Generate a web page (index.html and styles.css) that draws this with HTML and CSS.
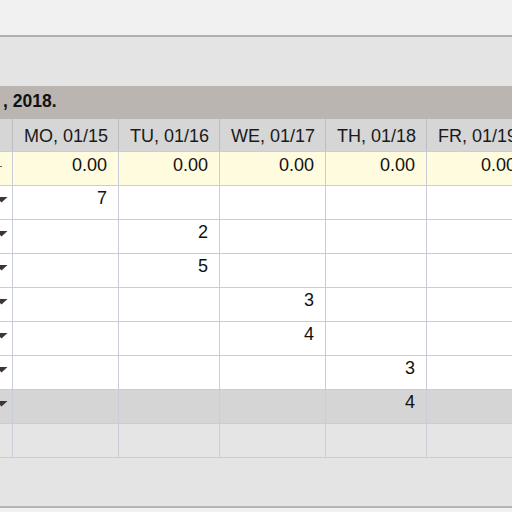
FILE: index.html
```html
<!DOCTYPE html>
<html>
<head>
<meta charset="utf-8">
<link rel="stylesheet" href="styles.css">
</head>
<body>
<div class="topbar"></div>
<div class="panel">
  <div class="toolbar"></div>
  <div class="title">, 2018.</div>
  <div class="grid">
    <div class="row head">
      <div class="c first"></div>
      <div class="c">MO, 01/15</div>
      <div class="c">TU, 01/16</div>
      <div class="c">WE, 01/17</div>
      <div class="c">TH, 01/18</div>
      <div class="c">FR, 01/19</div>
    </div>
    <div class="row total">
      <div class="c first"><span class="mark"></span></div>
      <div class="c">0.00</div>
      <div class="c">0.00</div>
      <div class="c">0.00</div>
      <div class="c">0.00</div>
      <div class="c">0.00</div>
    </div>
    <div class="row">
      <div class="c first"><svg class="dd" width="12" height="6" viewBox="0 0 12 6"><polygon points="-4,0 7.5,0 1.5,5.5"/></svg></div>
      <div class="c">7</div><div class="c"></div><div class="c"></div><div class="c"></div><div class="c"></div>
    </div>
    <div class="row">
      <div class="c first"><svg class="dd" width="12" height="6" viewBox="0 0 12 6"><polygon points="-4,0 7.5,0 1.5,5.5"/></svg></div>
      <div class="c"></div><div class="c">2</div><div class="c"></div><div class="c"></div><div class="c"></div>
    </div>
    <div class="row">
      <div class="c first"><svg class="dd" width="12" height="6" viewBox="0 0 12 6"><polygon points="-4,0 7.5,0 1.5,5.5"/></svg></div>
      <div class="c"></div><div class="c">5</div><div class="c"></div><div class="c"></div><div class="c"></div>
    </div>
    <div class="row">
      <div class="c first"><svg class="dd" width="12" height="6" viewBox="0 0 12 6"><polygon points="-4,0 7.5,0 1.5,5.5"/></svg></div>
      <div class="c"></div><div class="c"></div><div class="c">3</div><div class="c"></div><div class="c"></div>
    </div>
    <div class="row">
      <div class="c first"><svg class="dd" width="12" height="6" viewBox="0 0 12 6"><polygon points="-4,0 7.5,0 1.5,5.5"/></svg></div>
      <div class="c"></div><div class="c"></div><div class="c">4</div><div class="c"></div><div class="c"></div>
    </div>
    <div class="row">
      <div class="c first"><svg class="dd" width="12" height="6" viewBox="0 0 12 6"><polygon points="-4,0 7.5,0 1.5,5.5"/></svg></div>
      <div class="c"></div><div class="c"></div><div class="c"></div><div class="c">3</div><div class="c"></div>
    </div>
    <div class="row selected">
      <div class="c first"><svg class="dd" width="12" height="6" viewBox="0 0 12 6"><polygon points="-4,0 7.5,0 1.5,5.5"/></svg></div>
      <div class="c"></div><div class="c"></div><div class="c"></div><div class="c">4</div><div class="c"></div>
    </div>
    <div class="row empty">
      <div class="c first"></div>
      <div class="c"></div><div class="c"></div><div class="c"></div><div class="c"></div><div class="c"></div>
    </div>
  </div>
  <div class="spacer"></div>
</div>
<div class="footer"></div>
</body>
</html>
```

FILE: styles.css
```css
html, body {
  margin: 0;
  padding: 0;
  width: 512px;
  height: 512px;
  overflow: hidden;
  background: #f1f1f1;
  font-family: "Liberation Sans", Arial, Helvetica, sans-serif;
  color: #111;
}
.topbar {
  height: 35px;
  background: #f1f1f1;
  border-bottom: 2px solid #b0b0b0;
}
.panel {
  background: #e4e4e4;
  border-bottom: 2px solid #b4b4b4;
}
.toolbar {
  height: 49px;
}
.title {
  height: 33px;
  background: #bab5b0;
  font-weight: bold;
  font-size: 17.5px;
  line-height: 31px;
  padding-left: 3px;
  white-space: nowrap;
  color: #111;
}
.grid {
  display: flex;
  flex-direction: column;
  gap: 1px;
  background: #c9ccd9;
  width: 540px;
  padding-bottom: 1px;
}
.row {
  display: grid;
  grid-template-columns: 12px 105px 100px 105px 100px 100px;
  column-gap: 1px;
  height: 33px;
}
.c {
  background: #ffffff;
  font-size: 18px;
  line-height: 21px;
  padding: 2px 11px 0 0;
  text-align: right;
  white-space: nowrap;
  overflow: hidden;
}
.c.first {
  padding: 0;
}
.head {
  height: 32px;
  background: #bcbcc2;
}
.head .c {
  background: #d6d6d6;
  line-height: 31px;
  padding: 2px 10px 0 0;
  color: #1a1a1a;
}
.total .c {
  background: #fffbdf;
  padding-top: 3px;
}
.selected .c {
  background: #d5d5d5;
}
.empty .c {
  background: #e5e5e5;
}
.dd {
  display: block;
  margin-top: 11px;
  fill: #3a3733;
}
.mark {
  display: block;
  width: 2px;
  height: 1px;
  margin-top: 11px;
  background: #666;
}
.spacer {
  height: 48px;
}
.footer {
  height: 10px;
  background: #f1f1f1;
}
```
